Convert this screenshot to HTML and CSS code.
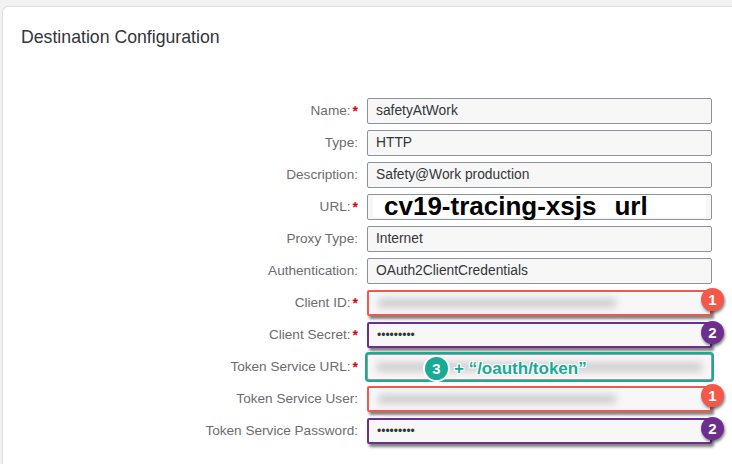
FILE: index.html
```html
<!DOCTYPE html>
<html>
<head>
<meta charset="utf-8">
<link rel="stylesheet" href="styles.css">
</head>
<body>
<div class="card">
  <h1 class="title">Destination Configuration</h1>
  <div class="form">
    <label class="lbl">Name:<span class="req">*</span></label>
    <div class="field"><div class="inp">safetyAtWork</div></div>

    <label class="lbl">Type:</label>
    <div class="field"><div class="inp">HTTP</div></div>

    <label class="lbl">Description:</label>
    <div class="field"><div class="inp">Safety@Work production</div></div>

    <label class="lbl">URL:<span class="req">*</span></label>
    <div class="field"><div class="inp"></div><div class="url-cover">cv19-tracing-xsjs<span class="url-gap"></span>url</div></div>

    <label class="lbl">Proxy Type:</label>
    <div class="field"><div class="inp">Internet</div></div>

    <label class="lbl">Authentication:</label>
    <div class="field"><div class="inp">OAuth2ClientCredentials</div></div>

    <label class="lbl">Client ID:<span class="req">*</span></label>
    <div class="field"><div class="inp hl-red"><span class="blur short"></span></div><span class="badge red">1</span></div>

    <label class="lbl">Client Secret:<span class="req">*</span></label>
    <div class="field"><div class="inp hl-purple"><span class="dots">•••••••••</span></div><span class="badge purple">2</span></div>

    <label class="lbl">Token Service URL:<span class="req">*</span></label>
    <div class="field"><div class="inp hl-teal"><span class="blur long"></span></div><div class="note"><span class="badge teal inline">3</span><span class="note-text">+ “/oauth/token”</span></div></div>

    <label class="lbl">Token Service User:</label>
    <div class="field"><div class="inp hl-red"><span class="blur short"></span></div><span class="badge red">1</span></div>

    <label class="lbl">Token Service Password:</label>
    <div class="field"><div class="inp hl-purple"><span class="dots">•••••••••</span></div><span class="badge purple">2</span></div>
  </div>
</div>
</body>
</html>
```

FILE: styles.css
```css
html, body {
  margin: 0;
  padding: 0;
  background: #f2f2f2;
  height: 100%;
  overflow: hidden;
}
body {
  padding: 6px 0 0 2px;
  box-sizing: border-box;
  font-family: "Liberation Sans", Arial, sans-serif;
}
.card {
  background: #fff;
  border: 1px solid #dcdcdc;
  border-right: none;
  border-bottom: none;
  border-radius: 6px 0 0 0;
  padding: 20px 0 40px 18px;
  height: 100%;
  box-sizing: border-box;
}
.title {
  margin: 0;
  font-size: 17.7px;
  line-height: 20px;
  font-weight: normal;
  color: #32363a;
}
.form {
  margin-top: 51px;
  display: grid;
  grid-template-columns: 337px 345px;
  grid-auto-rows: 26px;
  column-gap: 9px;
  row-gap: 6px;
}
.lbl {
  height: 26px;
  display: flex;
  justify-content: flex-end;
  align-items: center;
  font-size: 13.6px;
  line-height: 16px;
  color: #6a6d70;
  white-space: nowrap;
}
.req {
  color: #d8000c;
  font-weight: bold;
  margin-left: 2px;
  font-size: 14px;
  line-height: 16px;
}
.field {
  position: relative;
  height: 26px;
}
.inp {
  height: 26px;
  box-sizing: border-box;
  border: 1px solid #8c939b;
  border-radius: 2px;
  background: #f7f7f7;
  padding: 0 8px;
  font-size: 13.8px;
  line-height: 24px;
  color: #32363a;
  white-space: nowrap;
  overflow: hidden;
  display: flex;
  align-items: center;
}
.url-cover {
  position: absolute;
  left: 6px;
  right: 6px;
  top: 1px;
  height: 22px;
  background: #fff;
  font-weight: bold;
  font-size: 26px;
  line-height: 22px;
  color: #000;
  padding-left: 11px;
  white-space: nowrap;
  display: flex;
  align-items: center;
}
.url-gap {
  display: inline-block;
  width: 18px;
}
.hl-red {
  border: 2px solid #f05a4c;
  box-shadow: 2px 3px 3px rgba(0,0,0,0.5);
}
.hl-purple {
  border: 2px solid #6c2f90;
  box-shadow: 2px 3px 3px rgba(0,0,0,0.5);
}
.hl-teal {
  box-shadow: 0 0 0 2px #17aa95;
  border-color: #9a9a9a;
}
.blur {
  display: block;
  height: 10px;
  background: #c4c4c4;
  border-radius: 5px;
  filter: blur(3.5px);
  opacity: 0.75;
}
.blur.short { width: 240px; }
.blur.long { width: 332px; }
.dots {
  font-size: 12px;
  color: #32363a;
}
.badge {
  position: absolute;
  top: -2px;
  right: -12px;
  width: 23px;
  height: 23px;
  border-radius: 50%;
  color: #fff;
  font-weight: bold;
  font-size: 15px;
  line-height: 23px;
  text-align: center;
  box-shadow: 1px 2px 3px rgba(0,0,0,0.5);
}
.badge.red { background: #f2594a; }
.badge.purple { background: #6c2f90; top: -1px; }
.badge.teal { background: #17aa95; }
.note {
  position: absolute;
  left: 58px;
  top: 3px;
  display: flex;
  align-items: center;
  gap: 6px;
}
.badge.inline {
  position: static;
  box-shadow: 0 0 0 2px #fff;
}
.note-text {
  font-weight: bold;
  font-size: 17px;
  color: #17aa95;
  text-shadow: 0 0 2px #fff, 0 0 2px #fff, 1px 1px 0 #fff, -1px -1px 0 #fff, 1px -1px 0 #fff, -1px 1px 0 #fff;
}
```
